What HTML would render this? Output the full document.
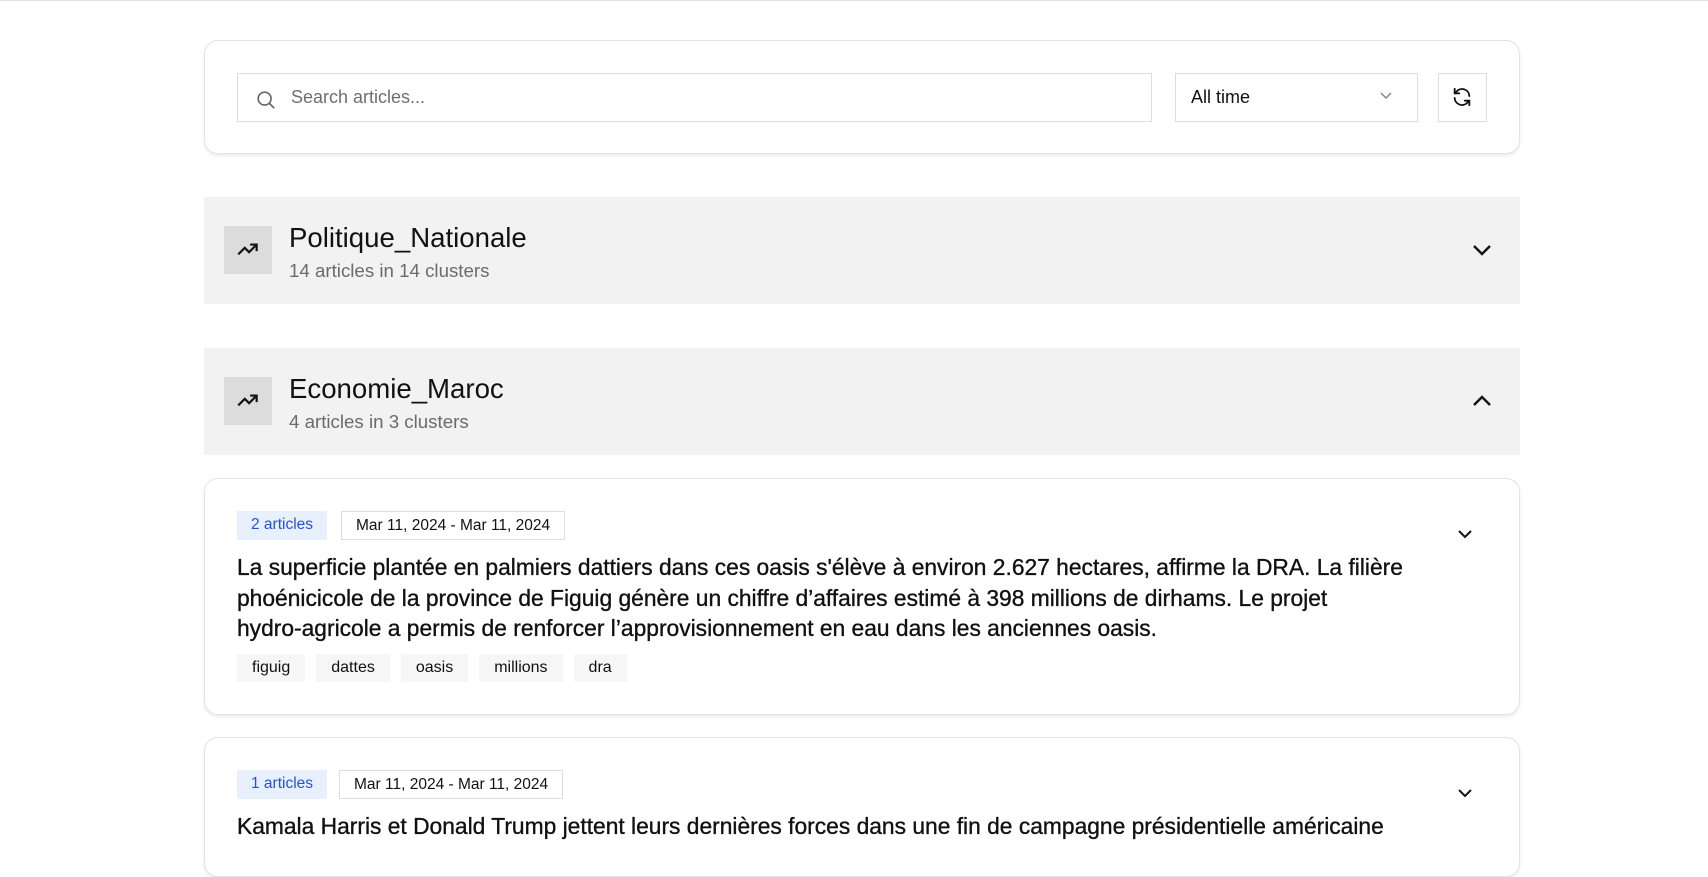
<!DOCTYPE html>
<html><head><meta charset="utf-8"><style>
*{box-sizing:border-box;margin:0;padding:0}
body{width:1708px;height:838px;overflow:hidden;background:#fff;font-family:"Liberation Sans",sans-serif;color:#111;border-top:1px solid #e2e2e2;position:relative}
.abs{position:absolute}
.card{position:absolute;left:204px;width:1316px;background:#fff;border:1px solid #e3e3e3;border-radius:14px;box-shadow:0 2px 3px rgba(0,0,0,.08)}
.panel{position:absolute;left:204px;width:1316px;background:#f2f2f2}
.ibox{position:absolute;left:20px;top:29px;width:48px;height:48px;background:#dcdcdc;display:flex;align-items:center;justify-content:center}
.ptitle{position:absolute;left:85px;top:25px;font-size:27.6px;color:#111}
.psub{position:absolute;left:85px;top:63px;font-size:18.7px;color:#6b6b6b}
.badge{position:absolute;height:29px;line-height:28px;font-size:15.5px;padding:0 14px}
.b1{background:#e8effd;color:#2453d6}
.b2{border:1px solid #dedede;background:#fff;color:#111}
.atitle{position:absolute;left:32px;font-size:22.8px;line-height:30.5px;white-space:nowrap;color:#111;-webkit-text-stroke:0.35px #111}
.tag{display:inline-block;background:#f6f6f6;height:28px;line-height:28px;font-size:16px;padding:0 15px;margin-right:11px}
</style></head><body>
<div class="card" style="top:39px;height:114px">
  <div class="abs" style="left:32px;top:32px;width:915px;height:49px;border:1px solid #dedede"></div>
  <svg class="abs" style="left:50px;top:48px" width="22" height="22" viewBox="0 0 24 24" fill="none" stroke="#666" stroke-width="1.8"><circle cx="10.5" cy="10.5" r="7"/><path d="M15.5 15.5L21 21"/></svg>
  <div class="abs" style="left:86px;top:46px;font-size:18px;color:#6e6e6e">Search articles...</div>
  <div class="abs" style="left:970px;top:32px;width:243px;height:49px;border:1px solid #dedede"></div>
  <div class="abs" style="left:986px;top:46px;font-size:18px;color:#111">All time</div>
  <svg class="abs" style="left:1174px;top:49px" width="14" height="10" viewBox="0 0 14 10" fill="none" stroke="#888" stroke-width="1.5"><path d="M2 3l5 5 5-5"/></svg>
  <div class="abs" style="left:1233px;top:32px;width:49px;height:49px;border:1px solid #dedede"></div>
  <svg class="abs" style="left:1246px;top:45px" width="22" height="22" viewBox="0 0 24 24" fill="none" stroke="#111" stroke-width="2" stroke-linecap="round" stroke-linejoin="round"><path d="M20 11A8 8 0 0 0 6 6L4 8"/><path d="M4 3v5h5"/><path d="M4 13a8 8 0 0 0 14 5l2-2"/><path d="M20 21v-5h-5"/></svg>
</div>

<div class="panel" style="top:196px;height:107px">
  <div class="ibox"><svg width="26" height="26" viewBox="0 0 24 24" fill="none" stroke="#111" stroke-width="2"><path d="M3 16l6-6 4 4 7-7"/><path d="M14 7h6v6"/></svg></div>
  <div class="ptitle">Politique_Nationale</div>
  <div class="psub">14 articles in 14 clusters</div>
  <svg class="abs" style="left:1267px;top:46px" width="22" height="14" viewBox="0 0 22 14" fill="none" stroke="#111" stroke-width="2.4"><path d="M3 3l8 8 8-8"/></svg>
</div>

<div class="panel" style="top:347px;height:107px">
  <div class="ibox"><svg width="26" height="26" viewBox="0 0 24 24" fill="none" stroke="#111" stroke-width="2"><path d="M3 16l6-6 4 4 7-7"/><path d="M14 7h6v6"/></svg></div>
  <div class="ptitle">Economie_Maroc</div>
  <div class="psub">4 articles in 3 clusters</div>
  <svg class="abs" style="left:1267px;top:46px" width="22" height="14" viewBox="0 0 22 14" fill="none" stroke="#111" stroke-width="2.4"><path d="M3 11l8-8 8 8"/></svg>
</div>

<div class="card" style="top:477px;height:237px">
  <div class="badge b1" style="left:32px;top:32px">2 articles</div>
  <div class="badge b2" style="left:136px;top:32px">Mar 11, 2024 - Mar 11, 2024</div>
  <svg class="abs" style="left:1252px;top:50px" width="16" height="10" viewBox="0 0 16 10" fill="none" stroke="#111" stroke-width="2"><path d="M2 2l6 6 6-6"/></svg>
  <div class="atitle" style="top:73px">La superficie plantée en palmiers dattiers dans ces oasis s'élève à environ 2.627 hectares, affirme la DRA. La filière<br>phoénicicole de la province de Figuig génère un chiffre d’affaires estimé à 398 millions de dirhams. Le projet<br>hydro-agricole a permis de renforcer l’approvisionnement en eau dans les anciennes oasis.</div>
  <div class="abs" style="left:32px;top:175px"><span class="tag">figuig</span><span class="tag">dattes</span><span class="tag">oasis</span><span class="tag">millions</span><span class="tag">dra</span></div>
</div>

<div class="card" style="top:736px;height:140px">
  <div class="badge b1" style="left:32px;top:32px">1 articles</div>
  <div class="badge b2" style="left:134px;top:32px">Mar 11, 2024 - Mar 11, 2024</div>
  <svg class="abs" style="left:1252px;top:50px" width="16" height="10" viewBox="0 0 16 10" fill="none" stroke="#111" stroke-width="2"><path d="M2 2l6 6 6-6"/></svg>
  <div class="atitle" style="top:73px">Kamala Harris et Donald Trump jettent leurs dernières forces dans une fin de campagne présidentielle américaine</div>
</div>
</body></html>
